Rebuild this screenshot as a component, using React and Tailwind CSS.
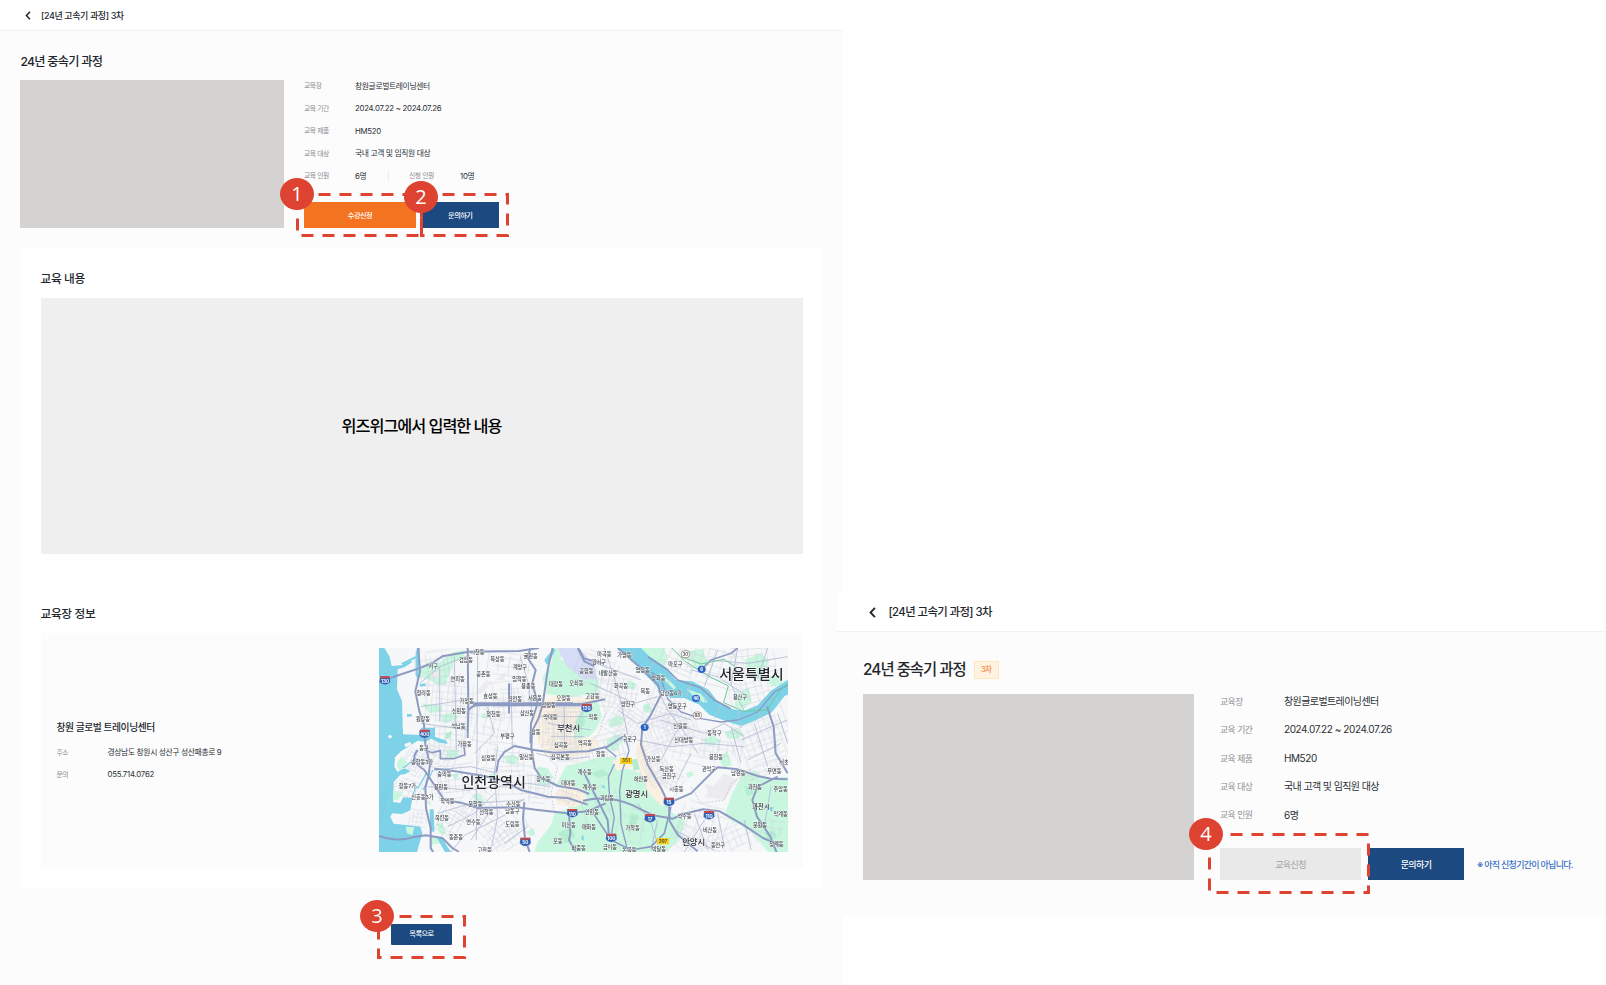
import React from "react";

const FONT = "font-[Inter,'Noto_Sans_CJK_KR',sans-serif]";

/* ---------- map ---------- */

function makeRandom(seed) {
  let s = seed;
  return () => {
    s = (s * 1664525 + 1013904223) % 4294967296;
    return s / 4294967296;
  };
}

// Street grids: centre x, centre y, width, height, angle, spacing
const GRIDS = [
  [190, 90, 110, 110, -8, 18],
  [240, 200, 150, 150, 4, 17],
  [235, 300, 120, 110, 2, 15],
  [360, 250, 140, 150, 12, 24],
  [420, 180, 150, 110, -4, 16],
  [420, 80, 140, 80, 8, 26],
  [200, 350, 120, 70, 25, 15],
  [130, 370, 70, 70, 32, 12],
  [110, 450, 80, 60, 20, 14],
  [240, 430, 150, 110, -6, 15],
  [400, 350, 150, 80, 6, 20],
  [420, 430, 180, 100, -2, 17],
  [350, 540, 200, 120, 42, 17],
  [240, 540, 90, 110, 30, 15],
  [145, 535, 60, 50, 8, 12],
  [410, 590, 150, 80, -30, 19],
  [500, 440, 90, 110, 5, 18],
  [570, 260, 130, 140, 0, 10],
  [600, 340, 120, 60, 2, 11],
  [600, 200, 90, 60, 0, 13],
  [590, 470, 60, 50, 20, 11],
  [680, 90, 130, 100, 20, 20],
  [740, 160, 140, 120, 10, 15],
  [760, 250, 120, 110, 35, 12],
  [720, 320, 120, 80, -15, 17],
  [880, 200, 110, 130, 18, 13],
  [900, 270, 160, 110, -20, 14],
  [970, 320, 170, 100, 12, 20],
  [850, 380, 90, 130, -25, 12],
  [900, 420, 90, 80, 30, 14],
  [930, 70, 130, 90, 24, 19],
  [1040, 80, 180, 130, 14, 20],
  [1150, 60, 150, 110, -6, 20],
  [1150, 150, 150, 90, -16, 20],
  [1170, 290, 180, 170, -20, 18],
  [1060, 320, 120, 90, 8, 22],
  [1180, 390, 130, 40, -18, 18],
  [1000, 560, 150, 130, 16, 24],
  [1090, 600, 140, 80, -24, 18],
  [960, 610, 120, 70, 36, 15],
  [1200, 570, 90, 60, 10, 22],
  [800, 560, 120, 100, 14, 34],
  [690, 500, 110, 120, -18, 34],
];

function buildStreets() {
  const rnd = makeRandom(11);
  return GRIDS.map(([cx, cy, w, h, angle, step]) => {
    let d = "";
    for (let x = -w / 2; x <= w / 2; x += step * (0.65 + rnd() * 0.7)) {
      const a = -h / 2 + (rnd() * h) / 3;
      const b = h / 2 - (rnd() * h) / 3;
      const k = (rnd() - 0.5) * 12;
      d += `M${x.toFixed(1)} ${a.toFixed(1)}Q${(x + k).toFixed(1)} ${((a + b) / 2).toFixed(1)} ${x.toFixed(1)} ${b.toFixed(1)}`;
    }
    for (let y = -h / 2; y <= h / 2; y += step * (0.65 + rnd() * 0.7)) {
      const a = -w / 2 + (rnd() * w) / 3;
      const b = w / 2 - (rnd() * w) / 3;
      const k = (rnd() - 0.5) * 12;
      d += `M${a.toFixed(1)} ${y.toFixed(1)}Q${((a + b) / 2).toFixed(1)} ${(y + k).toFixed(1)} ${b.toFixed(1)} ${y.toFixed(1)}`;
    }
    return { d, cx, cy, angle };
  });
}

const STREETS = buildStreets();

const PLACES = [
  ["시천동", 319, 38], ["검암동", 285, 60], ["목상동", 379, 59], ["귤현동", 479, 48],
  ["서구", 187, 80], ["계양구", 447, 83], ["공촌동", 337, 103], ["연희동", 260, 117],
  ["임학동", 445, 118], ["용종동", 472, 139], ["대장동", 555, 134], ["오쇠동", 616, 131],
  ["공항동", 646, 95], ["청라동", 158, 160], ["효성동", 358, 170], ["작전동", 432, 177],
  ["서운동", 492, 174], ["오정동", 578, 175], ["고강동", 664, 168], ["가정동", 287, 184],
  ["삼정동", 533, 196], ["신현동", 264, 214], ["청천동", 367, 222], ["삼산동", 468, 219],
  ["약대동", 538, 232], ["작동", 667, 233], ["원창동", 156, 237], ["석남동", 262, 260],
  ["상동", 494, 276], ["부평구", 409, 289], ["가좌동", 281, 312], ["심곡동", 570, 315],
  ["역곡동", 642, 311], ["동구", 159, 324], ["십정동", 352, 354], ["일신동", 466, 351],
  ["심곡본동", 568, 351], ["송학동3가", 153, 367], ["숭의동", 220, 403], ["계수동", 641, 398],
  ["장수동", 517, 418], ["대야동", 592, 431], ["계수동", 656, 441], ["항동7가", 109, 438], ["용현동", 210, 442],
  ["신흥동3가", 154, 471], ["학익동", 229, 483], ["문학동", 313, 492], ["수산동", 427, 492],
  ["선학동", 346, 516], ["남동구", 424, 515], ["안현동", 663, 516], ["옥련동", 213, 535],
  ["연수동", 307, 548], ["도림동", 424, 552], ["미산동", 593, 556], ["매화동", 654, 562],
  ["동춘동", 255, 593], ["포동", 560, 605], ["하중동", 623, 624], ["고잔동", 341, 631],
  ["마곡동", 700, 44], ["가양동", 760, 47], ["강서구", 684, 68], ["내발산동", 711, 100],
  ["염창동", 815, 92], ["마포구", 913, 74], ["양화동", 862, 114], ["화곡동", 750, 138],
  ["목동", 823, 155], ["당산동6가", 900, 159], ["용산구", 1107, 171], ["양천구", 771, 192],
  ["영등포구", 919, 200], ["신길동", 928, 258], ["동작구", 1030, 280], ["구로구", 776, 297],
  ["신대방동", 938, 301], ["항동", 689, 342], ["봉천동", 1035, 352], ["가산동", 847, 357],
  ["서초구", 1246, 368], ["독산동", 887, 387], ["관악구", 1014, 388], ["남현동", 1102, 400],
  ["우면동", 1210, 393], ["금천구", 894, 410], ["하안동", 810, 417], ["시흥동", 916, 449],
  ["과천동", 1152, 442], ["주암동", 1229, 448], ["과림동", 708, 474], ["막계동", 1229, 522],
  ["석수동", 940, 528], ["문원동", 1167, 556], ["가학동", 785, 565], ["비산동", 1017, 572],
  ["청계동", 1216, 612], ["금이동", 717, 621], ["논곡동", 775, 630], ["박달동", 864, 629],
  ["동안구", 1041, 617],
];

const CITIES = [
  ["인천광역시", 368, 426, 42], ["부천시", 593, 263, 25], ["서울특별시", 1141, 100, 42],
  ["광명시", 797, 463, 25], ["안양시", 968, 606, 25], ["과천시", 1170, 499, 19],
];

const SHIELDS = [
  ["130", 42, 121], ["400", 161, 281], ["120", 647, 203], ["110", 604, 519],
  ["50", 463, 605], ["15", 894, 485], ["17", 837, 534], ["110", 1014, 525], ["100", 721, 593],
];

const RIVER =
  "M740 24h70l24 24 50 34 30 38 50 4 50 26 22 30 40 26 44 6 40-16 40-44 50-32 31-4v34l-40 18-40 50-50 24-40 16-46-14-50-20-30-30-46-20-40 0-36-30-46-46-50-50z";

function RegionMap() {
  return (
    <svg
      className="block h-[204px] w-[409px] shrink-0"
      viewBox="24 24 1227 612"
      preserveAspectRatio="none"
      fontFamily="Inter, 'Noto Sans CJK KR', sans-serif"
    >
      <rect x="24" y="24" width="1227" height="612" fill="#f6f7f8" />
      {/* parks and hills */}
      <g fill="#c9f6de">
        <path d="M148 88l22-22 34 4 42-34 36-6-2 22-32 14-10 30-16 40-28-4-24-16-24-4z" />
        <path d="M152 190l60 8 4 16-40 6zM206 225l50-8 4 18-40 16zM225 330l40-2-5 22-30 6z" />
        <path d="M548 40l50 40 56 30 30 10v52l-44-8-40 8-74-10-12-50 26-40zM540 24h40l-10 30-30-6z" />
        <path d="M620 200l60-20 12 50-18 40-20 20-30 30-24-10 10-60z" />
        <path d="M585 378l50-12 50-14 50 0 20 30 48 16 70 70 30 50 40 20-16 56-40 42H490l10-30 40-50 10-36 30-10 36-24 0-30-40-20-24 6z" />
        <path d="M500 380l30 4 16 26-10 24-26 2-14-24z" />
        <path d="M770 400l60 50 50 60-10 126H740z" />
        <path d="M1110 410l40-20 30 26 71-6v226h-60l-50-60-80-50 20-60z" />
        <path d="M1084 470l30-40 30 10 10 90-70 20z" />
        <path d="M800 24h80l10 30-24 48-42-30-50-40z" />
        <path d="M398 350l28-8 18 14-14 18-22-4zM306 464l20-4 14 24-12 20-14-6zM355 402l18-2 6 14-20 6zM243 404l16-4 6 14-14 6z" />
        <path d="M194 552l20-4 12 30-14 10zM168 486l10-4 2 18zM180 590l30 0 4 20-34 4zM470 572l18-8 4 20-16 6z" />
        <path d="M712 240l30-14 20 10-10 18-36 8zM706 300l40-20 8 22-20 32-24-8zM772 120l26 12-8 18-28-8zM814 196l22-6 6 26-20 4z" />
        <path d="M1060 276l40-12 18 18-20 16-30-4zM990 300l40-14 20 20-30 12zM1040 350l30-16 12 40-24 10zM1094 166l40-24 8 40-24 26-28-8zM1120 60l50-20 24 20-20 60-40-10zM1190 112l36-8 12 30-40 6zM950 34l44-8 20 50-40 10z" />
        <path d="M900 574l24 6-6 30-20 4zM848 472l26 4-6 20-22-2zM945 400l16-6 8 12-18 8zM332 222l10-4 6 14-14 4z" />
      </g>
      <g fill="#b4eecf">
        <path d="M225 280l18-6-6 20-16 4zM610 230l24-20 10 40-30 30zM660 400l36-14 20 18-34 10zM560 580l40-20 14 30-30 20zM780 360l24-6 10 32-26 6zM780 520l24 6-10 32-22-6zM1120 440l24-6 4 28-20 6zM1180 580l30-10 8 24-26 6z" />
      </g>
      {/* built-up areas */}
      <g fill="#faf1e2">
        <path d="M486 236l24-50 40-18 100 8 30-14 10 14-50 24-24 40-8 60 36-10 40 10-20 40-70 14-70-10-24-40z" />
        <path d="M552 460l40-28 44 16 14 34-40 20-50-8z" />
        <path d="M800 304l16-10 20 60 40 90 16 50-20 4-40-40-26-70-12-50zM724 360l50-8 14 30-50 10z" />
      </g>
      <path d="M560 24l24 50 50 44 46 0-10-42-40-46-20-6z" fill="#d6dcf5" />
      <g fill="#ececee">
        <path d="M306 166l40-46 16 10-30 30zM374 120l30-24-4 24zM1000 470l60-70 40 20-40 60zM1000 430l30 10-14 30zM180 96l30-4-2 20-26 4z" />
      </g>

      {/* minor streets */}
      <g fill="none" stroke="#c3c9da" strokeWidth="1.5" opacity="0.75">
        {STREETS.map((g, i) => (
          <path key={i} d={g.d} transform={`translate(${g.cx} ${g.cy}) rotate(${g.angle})`} />
        ))}
      </g>

      {/* water */}
      <g fill="#7dd2e8">
        <path d="M24 24H40L56 50L62 78L90 76L120 62L124 66L100 82L80 88L78 148L93 183L96 283L150 285L150 263L192 263L192 290L226 302L230 312L206 308L180 296L164 306L140 302L112 320L90 334L72 352L70 380L80 396L98 384L118 392L104 402L88 404L68 426L66 486L88 489L96 472L124 474L118 511L93 522L64 520L58 530L68 551L113 556L148 560L154 580L148 601L138 636H24Z" />
        <path d="M176 508L188 508L190 576L178 574ZM196 590L212 594L240 636H222ZM134 40l4-16h8l-4 90-8-6zM90 70l44-22 2 6-40 20zM108 222h14v8h-14zM146 132l18-2 0 8-16 2z" />
        <path d={RIVER} />
        <path d="M520 60l26-34 8 4-26 46zM1190 504l18-4-6 16zM690 440l10-4 2 10zM630 596l6-14 3 20z" />
      </g>
      <g fill="#f6f7f8">
        <path d="M50 288l8-4 6 6-8 6zM100 312l18-6 4 8-18 8z" />
      </g>
      <path d="M80 362l14-12 12 16-4 20-18 4-6-12zM66 452l30 4-12 22-18 4zM104 560l26 2-6 24-16-6z" fill="#c9f6de" />
      <path d="M26 540c2-60 8-80 40-112M36 524c4-50 10-60 30-86" fill="none" stroke="#63bfd9" strokeWidth="1.5" strokeDasharray="5 4" />
      <path d="M140 446l26-46M126 462l12-24M96 384l40-30M186 390l-30 60" stroke="#7dd2e8" strokeWidth="4" />
      <path d="M866 98l34 28 16 18-8 4-34-32zM946 146l44 16 20 24-12 2-34-24z" fill="#c9f6de" />
      <g fill="none" stroke="#b9c6dc" strokeWidth="2.5">
        <path d="M794 30l-14 36M850 64l-24 42M904 110l-30 42M960 126l-14 44M1010 150l-12 44M1050 196l-20 40M1100 214l10 50M1150 196l24 40M1196 152l26 36" />
      </g>

      {/* secondary roads */}
      <g fill="none" stroke="#b1bad5" strokeWidth="2.5">
        <path d="M146 130l60-50 90-34M206 80v164M250 50l6 280M320 40l-4 560M150 200l130-20M150 250l140 20M190 390l110-10 80 20M380 320l-10 80 10 130-20 100M420 130l4 190M448 50l24 80 10 80M170 440l120 10 180-20 70 10" />
        <path d="M200 520l100-30 160-10M230 560l80-40 60-60M300 600l60-90M240 636l40-50 120-60 60-50M400 610l70-50M500 230h150M580 200v130M530 250l130 20M540 290h100M496 340l80 20 80-10M350 200l20 80-60 60" />
        <path d="M650 60l80 30 80 30M700 24l40 120 30 140M660 130l130 60 70-20M740 210l60 40 100-30 60 20M860 150l30 60 60 80 30 50M800 300l100 20 100-10 120 10M870 240l130 40 60-30 60 40M930 250l-60 110M960 340l-40 80" />
        <path d="M960 90l80 20 90 60M1040 30l-40 110M1100 24l-20 110 40 80M1190 24l-30 90M1010 60l120 10 120-20M1110 300l90-40 50-20M1130 360l100-50M1150 250l40 130M1220 220l30 90M1080 260l30 110" />
        <path d="M970 520l40 110M1000 540l-60 96M1040 520l20 100M910 570l120 60M1120 540l20 90M1200 440l-20 120M860 540l-20 90M800 490l40 60 20 60" />
      </g>

      {/* trunk roads */}
      <g fill="none" stroke="#8d9bc3" strokeWidth="6" strokeLinejoin="round">
        <path d="M24 127l60-22 60-20 40-16 30-20 80-14 150-2 60-9" />
        <path d="M142 24l5 70-14 60 12 60 14 40 4 60 14 60-4 30-10 40 2 60 14 60 0 60 30 50 40 22" />
        <path d="M290 24l2 180-2 90M292 210c20-20 40-18 60-18h280l70-14" />
        <path d="M306 190h300M306 196h330" />
        <path d="M545 24l-14 60-16 110-12 40-20 40-2 50 10 60 20 30 50 24 60 10 34 14" />
        <path d="M478 24l-8 30 24 36-10 40 16 60-20 60-2 60" />
        <path d="M376 396l6-34 18-26 30-18 60 12 60 8 100-4 60-14 46-30" />
        <path d="M160 330l24 8 24-6 0 24 40 0 34-12-4-30" strokeWidth="5" />
        <path d="M140 330c-20 24-10 40 20 60l60 90 50 8 50 16 120-2 60 8 90 10 60-6 54-24" />
        <path d="M190 386l40 4 110 18 60 16 50 26 80 20 60 4 60 20" />
        <path d="M24 588c30 12 70 14 100 4l40-6 50 8 30 30 20 12" />
        <path d="M460 486l-4 50 6 60 14 40M594 520l4 60-4 20 20 36M414 130v90M640 400l30 60 40 80 4 50M620 24l20 40 30 14" />
        <path d="M740 24l70 60 50 50 10 30-30 60-26 40-4 50 20 60 40 70 24 50 2 50 24 40 60 50" />
        <path d="M636 482c60-14 110-4 150 14l60 30 60 10 30-14 60-14 50 6 70 40 60 40 60 26" />
        <path d="M760 282l14 50-20 60-8 60 4 100 20 80" strokeWidth="4" />
        <path d="M890 490l70-30 60-60 20-18 60 6 60 20 40 8 50 2" />
        <path d="M1220 410l-60 30-16 40 14 50 40 60 20 50M1250 400l-36-60-6-80-20-60" />
        <path d="M840 96l30 20 20 60 40 40 60 20 60 10 50-6 60-24 50-60 40-20" strokeWidth="4" />
        <path d="M830 50l60 40 30 30 70 24 40 36 50 26" strokeWidth="5" />
        <path d="M900 500l-20 80-40 40-60 10-60-30-50-76M990 90l30-30 60-20 20-16M700 70l-60-14-16-30" strokeWidth="5" />
        <path d="M730 372l-18 40 4 60 14 60-10 60M700 320l36 30" strokeWidth="4" />
      </g>
      <g fill="none" stroke="#6cc997" strokeWidth="3">
        <path d="M902 24l40 40 70 44 60 30-14 50 60 26 70-4 40-60 24-20" />
        <path d="M930 50l60 22 70-14 30 20" />
      </g>
      <path d="M960 440l30 50 70-10 20-50 60-40M520 340l40 40-20 80 10 60M690 170l14 50-20 60-24 30" fill="none" stroke="#a5abb5" strokeWidth="1.5" strokeDasharray="6 4" />

      {/* labels */}
      <g fontSize="15.5" fill="#3f454d" stroke="#ffffff" strokeWidth="1.6" paintOrder="stroke" textAnchor="middle" fontWeight="500">
        {PLACES.map(([name, x, y]) => (
          <text key={name + x} x={x} y={y + 5.5}>{name}</text>
        ))}
      </g>
      {SHIELDS.map(([n, x, y]) => (
        <g key={n + x}>
          <path d={`M${x - 15} ${y - 12}h30l2 16q-4 8-17 10q-13-2-17-10z`} fill="#2d5fb4" stroke="#ffffff" strokeWidth="1" />
          <path d={`M${x - 14} ${y - 12}h28l1 6h-30z`} fill="#c9474a" />
          <text x={x} y={y + 8} fontSize="14" fontWeight="700" fill="#ffffff" textAnchor="middle">{n}</text>
        </g>
      ))}
      {[["6", 992, 88], ["46", 975, 175], ["1", 821, 262]].map(([n, x, y]) => (
        <g key={n}>
          <ellipse cx={x} cy={y} rx="12" ry="11" fill="#2d65c4" />
          <text x={x} y={y + 5} fontSize="13" fontWeight="700" fill="#ffffff" textAnchor="middle">{n}</text>
        </g>
      ))}
      {[["30", 943, 42], ["88", 979, 226]].map(([n, x, y]) => (
        <g key={n}>
          <rect x={x - 12} y={y - 10} width="24" height="21" rx="8" fill="#ffffff" stroke="#8d6f6c" strokeWidth="2" />
          <text x={x} y={y + 5} fontSize="13" fontWeight="600" fill="#555555" textAnchor="middle">{n}</text>
        </g>
      ))}
      {[["351", 765, 362], ["397", 876, 603]].map(([n, x, y]) => (
        <g key={n}>
          <rect x={x - 18} y={y - 9} width="36" height="19" fill="#fbcf1d" />
          <text x={x} y={y + 5} fontSize="14" fontWeight="600" fill="#4b4420" textAnchor="middle">{n}</text>
        </g>
      ))}
      <g fill="#22262b" stroke="#ffffff" strokeWidth="2" paintOrder="stroke" textAnchor="middle" fontWeight="500">
        {CITIES.map(([name, x, y, size]) => (
          <text key={name} x={x} y={y + size * 0.38} fontSize={size}>{name}</text>
        ))}
      </g>
    </svg>
  );
}

/* ---------- annotations ---------- */

function Outline({ className, width, height }) {
  return (
    <svg className={`pointer-events-none absolute overflow-visible ${className}`} width={width} height={height}>
      <rect x="0.5" y="0.5" width={width} height={height} fill="none" stroke="#dd4330" strokeWidth="3" strokeDasharray="12 9" />
    </svg>
  );
}

function Marker({ className, children }) {
  return (
    <span
      className={`absolute flex h-8 w-[34px] items-center justify-center rounded-[50%] bg-[#dd4330] font-['Open_Sans',sans-serif] text-[20px] leading-none text-white ${className}`}
    >
      {children}
    </span>
  );
}

/* ---------- shared pieces ---------- */

function Chevron({ className }) {
  return (
    <svg className={className} viewBox="0 0 6 10" fill="none" stroke="#23272d" strokeWidth="1.7">
      <path d="M5.2 0.8L1.2 5l4 4.2" />
    </svg>
  );
}

function SmallRow({ label, latin, children }) {
  return (
    <div className="flex h-[22.5px] items-center pt-px whitespace-nowrap">
      <span className="w-[51px] text-[6.8px] tracking-[-0.4px] text-[#8b8d91]">{label}</span>
      <span className={`text-[7.8px] text-[#2b3036] ${latin ? "tracking-[-0.24px]" : "tracking-[-0.37px]"}`}>{children}</span>
    </div>
  );
}

function LargeRow({ label, latin, children }) {
  return (
    <div className="flex h-[28.4px] items-center pt-px whitespace-nowrap">
      <span className="w-16 text-[8.8px] tracking-[-0.5px] text-[#8b8d91]">{label}</span>
      <span className={`text-[10px] text-[#2b3036] ${latin ? "tracking-[-0.43px]" : "tracking-[-0.6px]"}`}>{children}</span>
    </div>
  );
}

function CoursePage() {
  return (
    <div className="h-[985px] w-[843px] shrink-0 bg-[#fcfcfc]">
      <header className="flex h-[31px] items-center border-b border-[#f1f1f1] bg-white pl-[25px]">
        <Chevron className="h-[9px] w-[6px]" />
        <h1 className="ml-[10px] pt-[1.5px] text-[9px] font-medium tracking-[-0.4px] whitespace-nowrap text-[#23272d]">[24년 고속기 과정] 3차</h1>
      </header>
      <main className="px-5">
        <div className="flex h-[48.5px] items-center pt-[13px] pl-[0.5px]">
          <h2 className="text-[12.2px] leading-none font-medium tracking-[-0.75px] whitespace-nowrap text-[#23272d]">24년 중속기 과정</h2>
        </div>
        <section className="flex h-[148.5px]">
          <div className="w-[264px] bg-[#d4d3d1]" />
          <div className="ml-5 flex flex-col">
            <div className="-mt-[4.75px]">
              <SmallRow label="교육장">창원글로벌트레이닝센터</SmallRow>
              <SmallRow label="교육 기간" latin>2024.07.22 ~ 2024.07.26</SmallRow>
              <SmallRow label="교육 제품" latin>HM520</SmallRow>
              <SmallRow label="교육 대상">국내 고객 및 임직원 대상</SmallRow>
              <div className="flex items-center">
                <div className="w-[84px]">
                  <SmallRow label="교육 인원">6명</SmallRow>
                </div>
                <div className="mr-[20px] h-[10px] w-px bg-[#e9e9e9]" />
                <SmallRow label="신청 인원" latin>10명</SmallRow>
              </div>
            </div>
            <div className="mt-[14.75px] flex gap-[6px] text-[7.2px] font-medium tracking-[-0.5px] text-white">
              <button className="h-[26px] w-[112px] bg-[#f47321] pt-[2px]">수강신청</button>
              <button className="h-[26px] w-[76.5px] bg-[#1c4a80] pt-[2px]">문의하기</button>
            </div>
          </div>
        </section>
        <div className="mt-5 h-[640px] bg-white px-[20.5px]">
          <div className="flex h-[49.5px] items-center pt-[14px]">
            <h3 className="text-[11.7px] leading-none font-medium tracking-[-0.35px] whitespace-nowrap text-[#23272d]">교육 내용</h3>
          </div>
          <div className="flex h-64 items-center justify-center bg-[#efefef] pt-px text-[16.3px] font-medium tracking-[-1.05px] text-black">
            위즈위그에서 입력한 내용
          </div>
          <div className="flex h-[79px] items-center pt-[44.5px]">
            <h3 className="text-[11.7px] leading-none font-medium tracking-[-0.35px] whitespace-nowrap text-[#23272d]">교육장 정보</h3>
          </div>
          <div className="flex h-[235px] items-start justify-between bg-[#fcfcfc] pt-[15.5px] pr-[15px] pl-4">
            <div className="pt-[70.5px]">
              <h4 className="flex h-5 items-center text-[9.8px] font-medium tracking-[-0.47px] whitespace-nowrap text-[#23272d]">창원 글로벌 트레이닝센터</h4>
              <div className="pt-[2.5px]">
                <SmallRow label="주소">경상남도 창원시 성산구 성산패총로 9</SmallRow>
                <SmallRow label="문의" latin>055.714.0762</SmallRow>
              </div>
            </div>
            <RegionMap />
          </div>
        </div>
        <div className="mt-[35.5px] flex justify-center">
          <button className="h-[21px] w-[61px] rounded-[1px] bg-[#1c4a80] pt-px text-[7.2px] font-medium tracking-[-0.5px] text-white">목록으로</button>
        </div>
      </main>
    </div>
  );
}

function ClosedCoursePage() {
  return (
    <div className="mt-[593px] -ml-[6px] h-[323px] w-[769px] shrink-0 bg-[#fcfcfc]">
      <header className="flex h-[39px] items-center border-b border-[#f1f1f1] bg-white pl-[32px]">
        <Chevron className="h-[11px] w-[7px]" />
        <h1 className="ml-[12.5px] pt-[2px] text-[11.4px] font-medium tracking-[-0.6px] whitespace-nowrap text-[#23272d]">[24년 고속기 과정] 3차</h1>
      </header>
      <main className="px-[26px]">
        <div className="flex h-[62px] items-center gap-[8px] pt-[13px]">
          <h2 className="pt-px text-[15.4px] leading-none font-medium tracking-[-0.98px] whitespace-nowrap text-[#23272d]">24년 중속기 과정</h2>
          <span className="flex h-[18px] w-[25px] items-center justify-center border border-[#ffe6c2] bg-[#fff2e0] text-[7.5px] font-medium tracking-[-0.5px] text-[#f58a4b]">3차</span>
        </div>
        <section className="flex h-[186px]">
          <div className="w-[331px] bg-[#d4d3d1]" />
          <div className="ml-[26px]">
            <div className="-mt-[7.2px]">
              <LargeRow label="교육장">창원글로벌트레이닝센터</LargeRow>
              <LargeRow label="교육 기간" latin>2024.07.22 ~ 2024.07.26</LargeRow>
              <LargeRow label="교육 제품" latin>HM520</LargeRow>
              <LargeRow label="교육 대상">국내 고객 및 임직원 대상</LargeRow>
              <LargeRow label="교육 인원" latin>6명</LargeRow>
            </div>
            <div className="mt-[19.2px] flex items-center text-[9px] tracking-[-0.6px]">
              <button className="h-8 w-[141px] bg-[#e9e9e9] pt-px text-[#a0a0a0]">교육신청</button>
              <button className="ml-[7px] h-8 w-24 bg-[#1c4a80] pt-px font-medium text-white">문의하기</button>
              <p className="ml-[13px] pt-px font-medium tracking-[-0.72px] whitespace-nowrap text-[#3a70c4]">※ 아직 신청기간이 아닙니다.</p>
            </div>
          </div>
        </section>
      </main>
    </div>
  );
}

export default function App() {
  return (
    <div className={`relative flex h-[985px] w-[1606px] items-start overflow-hidden bg-white ${FONT}`}>
      <CoursePage />
      <ClosedCoursePage />
      <Outline className="top-[194px] left-[297px]" width={124} height={41} />
      <Outline className="top-[194px] left-[421px]" width={86} height={41} />
      <Outline className="top-[916px] left-[378px]" width={86} height={41} />
      <Outline className="top-[834px] left-[1209px]" width={159} height={58} />
      <Marker className="top-[178px] left-[280px]">1</Marker>
      <Marker className="top-[181px] left-[404px]">2</Marker>
      <Marker className="top-[900px] left-[360px]">3</Marker>
      <Marker className="top-[818px] left-[1189px]">4</Marker>
    </div>
  );
}
